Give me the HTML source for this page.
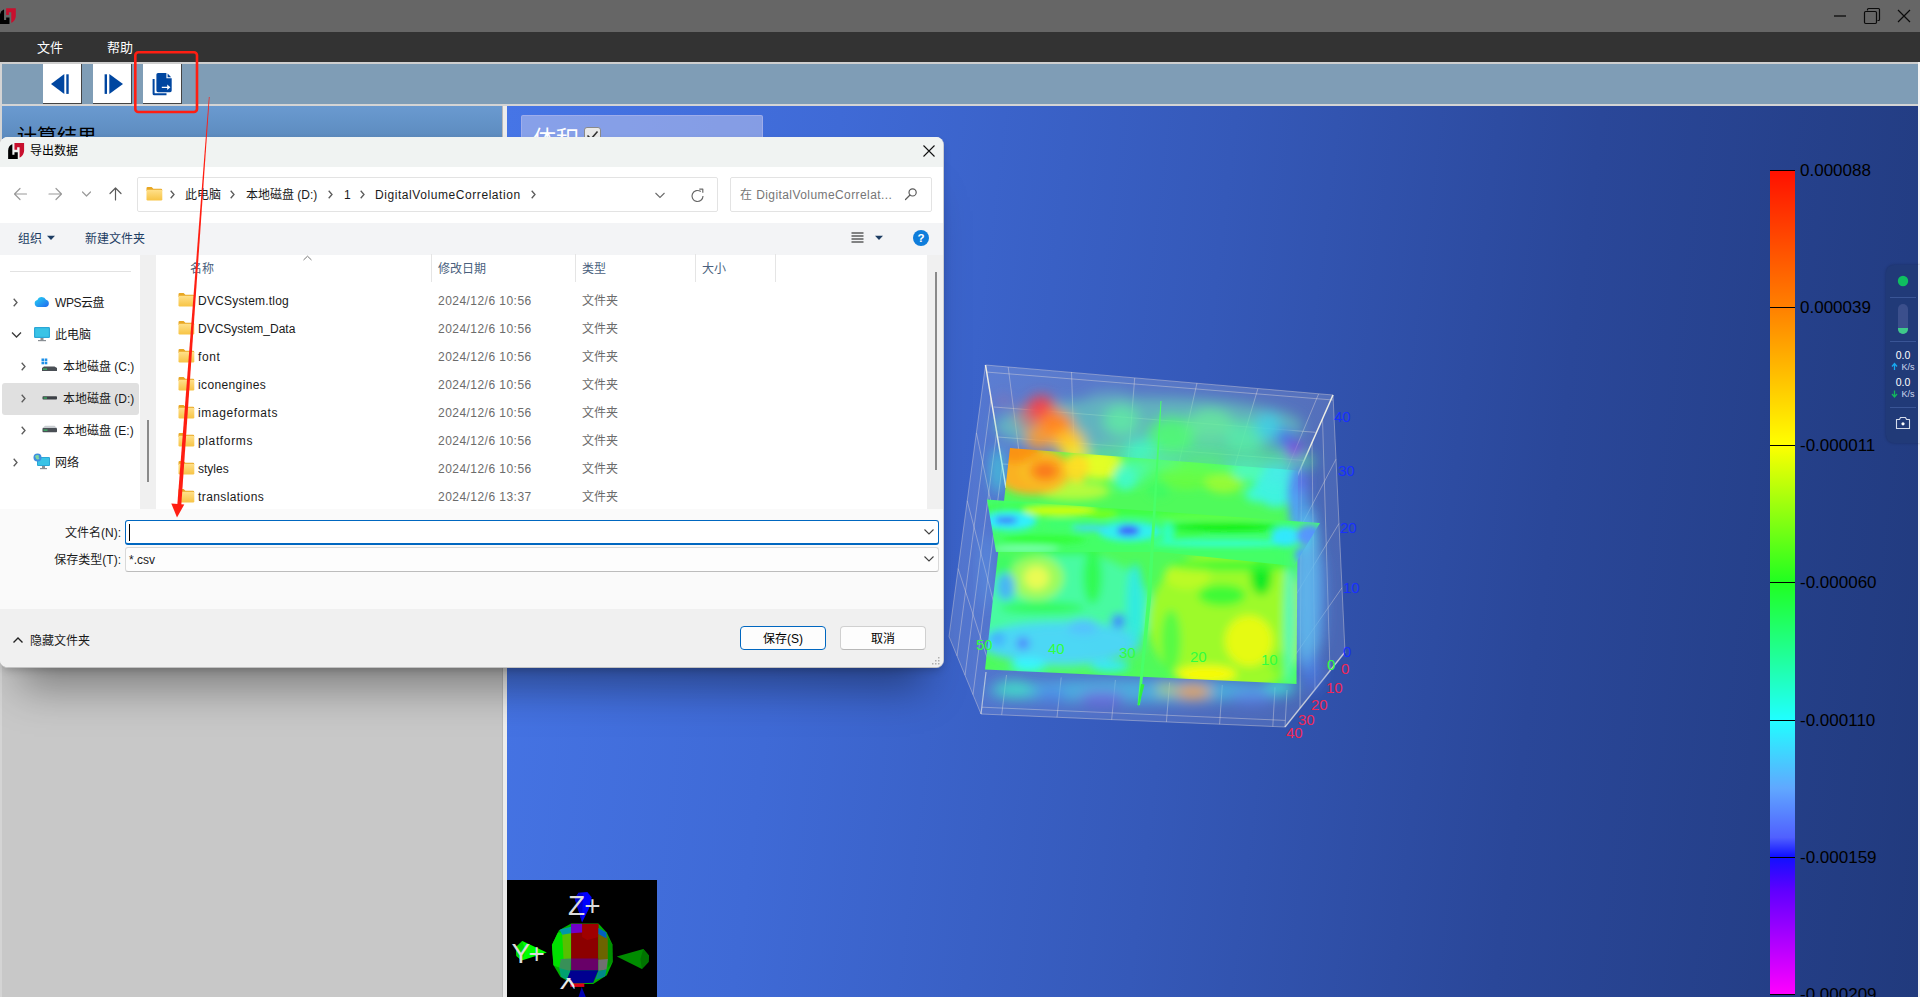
<!DOCTYPE html>
<html lang="zh-CN">
<head>
<meta charset="utf-8">
<title>导出数据</title>
<style>
*{box-sizing:border-box;margin:0;padding:0}
html,body{width:1920px;height:997px;overflow:hidden;background:#666}
body{position:relative;font-family:"Liberation Sans","Noto Sans CJK SC",sans-serif;font-size:12px;color:#1a1a1a}
.abs{position:absolute}
#titlebar{left:0;top:0;width:1920px;height:32px;background:#666666}
#menubar{left:0;top:32px;width:1920px;height:30px;background:#333333;color:#fff;font-size:13px}
#menubar span{position:absolute;top:7px;line-height:18px}
#toolbar{left:0;top:62px;width:1920px;height:44px;background:#7f9db6;border-top:2px solid #cfcfcf;border-bottom:2px solid #d4d4d4;border-left:2px solid #d4d4d4;border-right:2px solid #f4f4f4}
.tbtn{position:absolute;top:64px;width:39px;height:40px;background:#fff;border-right:1px solid #444;border-bottom:1px solid #444}
#leftpanel{left:0;top:106px;width:502px;height:891px;background:linear-gradient(#6a9ad0 0,#5f8ec2 26px,#5783b4 40px,#c8c8c8 40px);border-left:2px solid #d4d4d4}
#leftpanel .hd{position:absolute;left:15px;top:16px;font-size:20px;line-height:30px;color:#000;white-space:nowrap}
#splitter{left:502px;top:106px;width:5px;height:891px;background:#ececec;border-left:1px solid #b9b9b9}
#view{left:507px;top:106px;width:1411px;height:891px;overflow:hidden;background:linear-gradient(97deg,#4675e6 0%,#3f6ad6 22%,#3559b9 48%,#2a4799 72%,#213a7d 100%)}
#rightedge{left:1918px;top:62px;width:2px;height:935px;background:#f4f4f4}

#dlgshadow{left:0;top:137px;width:944px;height:531px;border-radius:8px;box-shadow:0 40px 40px -20px rgba(0,0,0,.37),0 4px 8px -2px rgba(0,0,0,.22)}
#dlg{left:0;top:137px;width:944px;height:531px;border-radius:8px;background:#fff;overflow:hidden;border-right:1px solid #c9ccd2;border-bottom:1px solid #c2c2c2}
#dlg .t{position:absolute;white-space:nowrap;line-height:16px;font-size:12px}
#dlg .g{color:#6b6b6b}
#dlg .h{color:#4a5f7d}
#dtitle{left:0;top:0;width:943px;height:30px;background:#f0f3f2}
#daddr{left:0;top:30px;width:943px;height:56px;background:#fff}
#dcmd{left:0;top:86px;width:943px;height:32px;background:#f3f4f6}
#dnavscroll{left:140px;top:118px;width:16px;height:254px;background:#f0f0f0}
#dlistscroll{left:927px;top:118px;width:16px;height:254px;background:#f0f0f0}
#dform{left:0;top:372px;width:943px;height:100px;background:#fafafa}
#dfoot{left:0;top:472px;width:943px;height:59px;background:#f0f0f0}
.box{position:absolute;border:1px solid #e3e3e3;background:#fff;border-radius:2px}
</style>
</head>
<body>
<div id="titlebar" class="abs"></div>
<div id="menubar" class="abs"><span style="left:37px">文件</span><span style="left:107px">帮助</span></div>
<div id="toolbar" class="abs"></div>
<div id="leftpanel" class="abs"><div class="hd">计算结果</div></div>
<div id="splitter" class="abs"></div>
<div id="view" class="abs"></div>
<div id="rightedge" class="abs"></div>
<svg class="abs" style="left:0;top:0" width="1920" height="32" viewBox="0 0 1920 32">
<!-- app logo -->
<g transform="translate(-0.3 8.2)"><path d="M0.130 7.460 Q0.400 2.600 4.050 1.280 L4.350 1.280 L4.350 11.830 L6.460 11.830 L6.460 9.270 L9.770 9.270 L9.770 15.900 L0.130 15.900 Z" fill="#000"/><path d="M6.460 0.080 L16.100 0.080 L16.100 8.060 Q15.700 12.600 11.580 14.690 L11.580 4.140 L9.170 4.140 L9.170 6.860 L6.460 6.860 Z" fill="#c8102e"/></g>
<!-- window controls -->
<path d="M1834 16 H1846" stroke="#0b0b0b" stroke-width="1.3" fill="none"/>
<path d="M1867.5 10.5 V9.5 Q1867.5 8.5 1868.5 8.5 H1878.5 Q1879.5 8.5 1879.5 9.5 V19.5 Q1879.5 20.5 1878.5 20.5 H1877.5" stroke="#0b0b0b" stroke-width="1.2" fill="none"/>
<rect x="1864.5" y="11.5" width="12" height="12" rx="1.2" stroke="#0b0b0b" stroke-width="1.2" fill="none"/>
<path d="M1898 10 L1910 22 M1910 10 L1898 22" stroke="#0b0b0b" stroke-width="1.2" fill="none"/>
</svg>
<div class="tbtn" style="left:43px"></div><div class="tbtn" style="left:93px"></div><div class="tbtn" style="left:143px"></div>
<svg class="abs" style="left:0;top:62px" width="220" height="44" viewBox="0 62 220 44">
<g fill="#0046a0">
<path d="M51 84 L64.3 74 L64.3 94 Z"/><rect x="66.3" y="74.3" width="2.4" height="19.6"/>
<rect x="104.6" y="74.3" width="2.4" height="19.6"/><path d="M123 84 L109.3 74 L109.3 94 Z"/>
<!-- export icon -->
<path d="M152.6 79 H154.6 V93.2 H166.5 V95.3 H154.2 Q152.6 95.3 152.6 93.7 Z"/>
<path d="M156.4 74.6 Q156.4 73 158 73 H166.4 V78.3 H171.7 V90.6 Q171.7 92.2 170.1 92.2 H158 Q156.4 92.2 156.4 90.6 Z M167.6 73.6 L171.2 77.2 H167.6 Z"/>
</g>
<path d="M161.8 86.7 H167.2 V84.6 L170.4 87.3 L167.2 90 V87.9 H161.8 Z" fill="#fff"/>
</svg>

<div class="abs" style="left:521px;top:115px;width:242px;height:60px;background:rgba(190,196,236,.55);border:1px solid rgba(170,180,235,.7);border-radius:2px"></div>
<div class="abs" style="left:533px;top:122px;font-size:23px;line-height:34px;color:#fff;white-space:nowrap">体积</div>
<div class="abs" style="left:584px;top:127px;width:17px;height:17px;background:#e9e9e9;border:1px solid #8a8a8a;border-radius:3px"></div><svg class="abs" style="left:584px;top:127px" width="17" height="17" viewBox="0 0 17 17"><path d="M3.500 8.500 L7 12 L13.500 4.500" fill="none" stroke="#333" stroke-width="1.600"/></svg>
<svg class="abs" style="left:507px;top:106px" width="1411" height="891" viewBox="507 106 1411 891" font-family="Liberation Sans,sans-serif">
<defs>
<linearGradient id="cbar" x1="0" y1="0" x2="0" y2="1">
<stop offset="0" stop-color="#ff1000"/><stop offset="0.1667" stop-color="#ff8000"/><stop offset="0.3333" stop-color="#ffff00"/><stop offset="0.5" stop-color="#20ff20"/><stop offset="0.6667" stop-color="#20ffff"/><stop offset="0.75" stop-color="#60a8ff"/><stop offset="0.81" stop-color="#5060ff"/><stop offset="0.8333" stop-color="#1010ff"/><stop offset="0.875" stop-color="#6000ff"/><stop offset="1" stop-color="#ff00ff"/>
</linearGradient>
</defs>
<!--VOLUME--><defs><radialGradient id="gor"><stop offset="0" stop-color="#ff6c10"/><stop offset=".45" stop-color="#ff8c14"/><stop offset=".75" stop-color="#ffc020" stop-opacity=".9"/><stop offset="1" stop-color="#f0f020" stop-opacity="0"/></radialGradient><filter id="bl8" x="-30%" y="-30%" width="160%" height="160%"><feGaussianBlur stdDeviation="6.5"/></filter><filter id="bl5" x="-30%" y="-30%" width="160%" height="160%"><feGaussianBlur stdDeviation="4.5"/></filter><filter id="bl3" x="-30%" y="-30%" width="160%" height="160%"><feGaussianBlur stdDeviation="3"/></filter>
<clipPath id="cxp"><polygon points="1010,448 1298,470.5 1296.5,684 985,669.5"/></clipPath><clipPath id="czp"><polygon points="987,499.5 1320,523 1294,566 1160,552 996,552"/></clipPath></defs>
<polygon points="985.5,365 1333,395 1345,652 1285,727 981,714 949,636.5" fill="#fff" fill-opacity=".13"/>
<polygon points="985.5,365 1333,395 1291,489 1008,497" fill="#fff" fill-opacity=".05"/>
<g stroke="#efe6dc" stroke-opacity=".38" stroke-width="1" fill="none"><polygon points="985.5,365 1333,395 1345,652 1285,727 981,714 949,636.5" fill="none"/><path d="M986 372 L1333 400"/><path d="M994 407 L1315.6 432.3"/><path d="M998 437 L1303.6 460.4"/><path d="M1002 464 L1296 478"/><path d="M1008.2 367 L1020.8 466.1"/><path d="M1071.5 372 L1074.6 464.5"/><path d="M1134.7 378 L1127.2 473.0"/><path d="M1197 383 L1177.0 471.8"/><path d="M1257.8 389 L1229.7 483.2"/><path d="M1318.6 394 L1279.7 487.0"/><path d="M1342.0 587.8 L1286.5 667.5"/><path d="M1339.0 523.5 L1288.0 608.0"/><path d="M1336.0 459.2 L1289.5 548.5"/><path d="M1330.0 670.8 L1322.5 418.5"/><path d="M1315.0 689.5 L1312.0 442.0"/><path d="M1300.0 708.2 L1301.5 465.5"/><path d="M958.1 568.6 L987.8 659.8"/><path d="M967.2 500.8 L994.5 605.5"/><path d="M976.4 432.9 L1001.2 551.2"/><path d="M957.0 655.9 L991.1 398.0"/><path d="M965.0 675.2 L996.8 431.0"/><path d="M973.0 694.6 L1002.4 464.0"/><path d="M1001.7 714.9 L1006.5 675.0"/><path d="M1057.0 717.2 L1061.2 677.5"/><path d="M1111.7 719.6 L1115.4 680.0"/><path d="M1166.4 721.9 L1169.6 682.5"/><path d="M1219.6 724.2 L1222.3 685.0"/><path d="M1272.8 726.5 L1275.0 687.4"/><path d="M981.9 707.2 L1285.3 720.4"/></g>
<g stroke="#f6f4e8" stroke-opacity=".95" stroke-width="1.5" fill="none"><path d="M985.5 365 L1006 488"/><path d="M1333 395 L1291.5 489"/><path d="M981 714 L986 672" stroke-opacity=".6" stroke-width="1.2"/><path d="M1285 727 L1287 690" stroke-opacity=".35" stroke-width="1"/><path d="M1285 727 L1345 652" stroke-opacity=".6"/></g>
<g filter="url(#bl8)"><ellipse cx="1148.5" cy="426.4" rx="154.4" ry="29" fill="#68d8b8" fill-opacity="0.6"/><ellipse cx="1187.1" cy="461.2" rx="127.4" ry="19.3" fill="#58f090" fill-opacity="0.72"/><ellipse cx="1026.9" cy="416.8" rx="11.6" ry="12.4" fill="#e06868" fill-opacity="0.6"/><ellipse cx="1041.2" cy="409.1" rx="13.9" ry="13.9" fill="#f04450"/><ellipse cx="1055.8" cy="426.4" rx="17.8" ry="16.2" fill="#ff8420"/><ellipse cx="1069.3" cy="441.9" rx="15.4" ry="12.4" fill="#ffc428"/><ellipse cx="1075.1" cy="453.5" rx="13.9" ry="8.5" fill="#f0e830"/><ellipse cx="1038.5" cy="438" rx="13.9" ry="12.4" fill="#ff9a30" fill-opacity="0.85"/><ellipse cx="997.9" cy="470.8" rx="6.9" ry="23.2" fill="#40e0e0" fill-opacity="0.7"/><ellipse cx="1003.7" cy="401.3" rx="4.6" ry="6.2" fill="#d06080" fill-opacity="0.45"/><ellipse cx="1121.5" cy="420.6" rx="18.5" ry="15.4" fill="#60f0a0" fill-opacity="0.75"/><ellipse cx="1171.7" cy="434.2" rx="23.9" ry="17.4" fill="#50ff70" fill-opacity="0.85"/><ellipse cx="1210.3" cy="424.5" rx="23.9" ry="15.4" fill="#68f098" fill-opacity="0.75"/><ellipse cx="1245" cy="436.1" rx="20.1" ry="15.4" fill="#58f0a8" fill-opacity="0.8"/><ellipse cx="1268.2" cy="426.4" rx="13.1" ry="13.9" fill="#40d0e8" fill-opacity="0.85"/><ellipse cx="1109.9" cy="397.5" rx="23.2" ry="7.7" fill="#70c8c0" fill-opacity="0.35"/><ellipse cx="1140.8" cy="451.5" rx="15.4" ry="13.5" fill="#40f8c8" fill-opacity="0.8"/><ellipse cx="1285.6" cy="438" rx="8.9" ry="9.7" fill="#4868e8" fill-opacity="0.95"/><ellipse cx="1293.7" cy="452.3" rx="8.1" ry="9.3" fill="#8a3ce0"/><ellipse cx="1297.5" cy="484.3" rx="6.9" ry="13.9" fill="#6868f0" fill-opacity="0.85"/><ellipse cx="986.3" cy="571.2" rx="6.2" ry="38.6" fill="#60a8f0" fill-opacity="0.4"/><ellipse cx="1306.8" cy="590.5" rx="13.1" ry="84.9" fill="#58b8f0" fill-opacity="0.85"/><ellipse cx="1301.4" cy="536.5" rx="10.8" ry="13.9" fill="#40e0f0" fill-opacity="0.75"/><ellipse cx="1311.4" cy="671.6" rx="9.7" ry="19.3" fill="#4a78e8" fill-opacity="0.65"/><ellipse cx="1320.3" cy="602.1" rx="6.9" ry="46.3" fill="#5a9af0" fill-opacity="0.4"/><ellipse cx="1140.8" cy="690.9" rx="154.4" ry="11.6" fill="#48c8e8" fill-opacity="0.7"/><ellipse cx="1013.4" cy="689" rx="19.3" ry="9.3" fill="#40f0c0" fill-opacity="0.65"/><ellipse cx="1102.2" cy="697.9" rx="23.2" ry="6.9" fill="#7858e0" fill-opacity="0.7"/><ellipse cx="1192.9" cy="691.7" rx="18.5" ry="7.7" fill="#ffa040" fill-opacity="0.85"/><ellipse cx="1165.9" cy="689.4" rx="9.3" ry="6.9" fill="#e0e040" fill-opacity="0.6"/><ellipse cx="1252.7" cy="696.7" rx="23.2" ry="7.7" fill="#6080f0" fill-opacity="0.6"/><ellipse cx="1052" cy="694" rx="15.4" ry="6.9" fill="#5078f0" fill-opacity="0.6"/><ellipse cx="1279.8" cy="686.3" rx="15.4" ry="8.5" fill="#40e8d0" fill-opacity="0.65"/></g>
<g clip-path="url(#cxp)" opacity=".97"><rect x="980" y="440" width="330" height="250" fill="#50ff58"/><g filter="url(#bl5)"><ellipse cx="1073.2" cy="490.9" rx="36.7" ry="9.3" fill="#b8ff38"/><ellipse cx="1100.2" cy="465" rx="23.9" ry="14.7" fill="#e8ff20"/><ellipse cx="1032.7" cy="470.8" rx="38.6" ry="23.9" fill="#ffb41c"/><ellipse cx="1017.2" cy="451.5" rx="23.2" ry="11.6" fill="#ff9410"/><ellipse cx="1045" cy="470.8" rx="25.5" ry="17.8" fill="url(#gor)"/><ellipse cx="1077.1" cy="467" rx="11.6" ry="15.4" fill="#ffe020"/><ellipse cx="1125.3" cy="478.6" rx="11.6" ry="11.6" fill="#40ffc0"/><ellipse cx="1187.1" cy="474.7" rx="27" ry="14.7" fill="#68ff40"/><ellipse cx="1223.8" cy="482.4" rx="19.3" ry="10.8" fill="#98ff30"/><ellipse cx="1256.6" cy="494" rx="11.6" ry="8.5" fill="#40ffd0"/><ellipse cx="1275.9" cy="484.3" rx="21.2" ry="23.2" fill="#40f8e0"/><ellipse cx="1297.1" cy="497.9" rx="6.9" ry="34.7" fill="#5088f0"/><ellipse cx="1248.9" cy="470.8" rx="15.4" ry="9.7" fill="#50ffb0"/><ellipse cx="1158.1" cy="490.1" rx="11.6" ry="7.7" fill="#40ff60"/><ellipse cx="1063.6" cy="609.8" rx="88.8" ry="57.9" fill="#48ffa0"/><ellipse cx="1036.5" cy="577.8" rx="27" ry="22.4" fill="#a0ff58"/><ellipse cx="1036.5" cy="577.8" rx="12.4" ry="11.6" fill="#f0ff50"/><ellipse cx="1092.5" cy="577" rx="9.3" ry="27" fill="#30ff50"/><ellipse cx="1042.3" cy="607.9" rx="42.5" ry="5.4" fill="#30ff50"/><ellipse cx="1001.8" cy="565.4" rx="11.6" ry="11.6" fill="#40ff60"/><ellipse cx="1067.4" cy="550" rx="34.7" ry="4.6" fill="#38ff40"/><ellipse cx="1059.7" cy="642.6" rx="81.1" ry="20.1" fill="#44e0f4"/><ellipse cx="1023" cy="643.4" rx="6.6" ry="6.6" fill="#4878ff"/><ellipse cx="1118.4" cy="621.4" rx="6.9" ry="7.3" fill="#4080ff"/><ellipse cx="1005.6" cy="586.7" rx="9.3" ry="13.9" fill="#48b8f4"/><ellipse cx="1028.8" cy="663.9" rx="17.4" ry="6.9" fill="#30ffff"/><ellipse cx="1017.2" cy="674.7" rx="34.7" ry="3.1" fill="#40ff80"/><ellipse cx="1135" cy="606" rx="8.5" ry="42.5" fill="#30f0e0"/><ellipse cx="1109.9" cy="665.8" rx="19.3" ry="5.4" fill="#30f0ff"/><ellipse cx="997.9" cy="638.8" rx="7.7" ry="7.7" fill="#40b0ff"/><ellipse cx="1082.9" cy="627.2" rx="15.4" ry="7.7" fill="#50c8ff"/><ellipse cx="1229.6" cy="621.4" rx="81.1" ry="73.4" fill="#a0ff28"/><ellipse cx="1261.2" cy="575.8" rx="10.8" ry="19.3" fill="#10f020"/><ellipse cx="1221.9" cy="595.2" rx="23.9" ry="10.8" fill="#40ff30"/><ellipse cx="1248.9" cy="640.7" rx="23.9" ry="25.5" fill="#ecff08"/><ellipse cx="1206.4" cy="673.9" rx="30.1" ry="8.5" fill="#ffff00"/><ellipse cx="1187.1" cy="575.8" rx="23.2" ry="13.1" fill="#c0ff20"/><ellipse cx="1170.9" cy="640.7" rx="10" ry="30.9" fill="#58ff40"/><ellipse cx="1279.8" cy="663.9" rx="10" ry="11.6" fill="#78ff30"/><ellipse cx="1289.4" cy="621.4" rx="4.6" ry="65.6" fill="#40ffc0"/><ellipse cx="1237.3" cy="565.4" rx="65.6" ry="5.4" fill="#38ff30"/></g></g>
<g filter="url(#bl8)"><ellipse cx="1133.1" cy="470.8" rx="16.2" ry="11.6" fill="#48f8c8" fill-opacity="0.7"/><ellipse cx="1160.1" cy="463.1" rx="23.2" ry="8.5" fill="#58f8a0" fill-opacity="0.6"/><ellipse cx="1204.5" cy="463.9" rx="23.9" ry="8.5" fill="#58ff70" fill-opacity="0.55"/><ellipse cx="1246.9" cy="467" rx="21.2" ry="9.3" fill="#50f8c0" fill-opacity="0.6"/><ellipse cx="1276.7" cy="472.8" rx="13.9" ry="11.6" fill="#48e8e8" fill-opacity="0.7"/><ellipse cx="1297.5" cy="490.1" rx="6.9" ry="27" fill="#5878f0" fill-opacity="0.85"/><ellipse cx="1299.1" cy="509.4" rx="8.5" ry="23.2" fill="#50c0f8" fill-opacity="0.6"/></g>
<g clip-path="url(#czp)" opacity=".98"><rect x="980" y="495" width="345" height="75" fill="#44ff68"/><g filter="url(#bl3)"><ellipse cx="1156.2" cy="509.4" rx="185.3" ry="5.4" fill="#40ff40"/><ellipse cx="1059.7" cy="510.6" rx="36.7" ry="5.4" fill="#d0ff10"/><ellipse cx="1102.2" cy="514.1" rx="15.4" ry="3.5" fill="#80ff10"/><ellipse cx="1009.5" cy="521" rx="27" ry="9.3" fill="#30f0ff"/><ellipse cx="1006.4" cy="520.3" rx="11.6" ry="3.9" fill="#4078ff"/><ellipse cx="1129.2" cy="531.4" rx="30.9" ry="10" fill="#30f0f0"/><ellipse cx="1128.4" cy="530.7" rx="11.6" ry="5.4" fill="#4060ff"/><ellipse cx="1090.6" cy="528" rx="19.3" ry="3.1" fill="#40d8ff"/><ellipse cx="1061.6" cy="524.1" rx="15.4" ry="5" fill="#40ff70"/><ellipse cx="1044.2" cy="539.6" rx="42.5" ry="3.9" fill="#30ff30"/><ellipse cx="1024.9" cy="548.8" rx="34.7" ry="3.5" fill="#80ffb0"/><ellipse cx="1218" cy="517.2" rx="61.8" ry="4.2" fill="#60ff48"/><ellipse cx="1223.8" cy="527.2" rx="54.1" ry="4.2" fill="#10f010"/><ellipse cx="1223.8" cy="543.4" rx="73.4" ry="3.1" fill="#30ffe0"/><ellipse cx="1181.3" cy="534.9" rx="23.2" ry="3.9" fill="#40ff50"/><ellipse cx="1285.6" cy="536.5" rx="14.7" ry="10" fill="#30e8ff"/><ellipse cx="1309.5" cy="535.7" rx="12.4" ry="10.8" fill="#5088ff"/><ellipse cx="1302.9" cy="555" rx="7.7" ry="7.7" fill="#4898ff"/><ellipse cx="1167.8" cy="533.4" rx="5.8" ry="10.8" fill="#30ffc0"/></g></g>
<g filter="url(#bl8)"><ellipse cx="1306.8" cy="590.5" rx="13.1" ry="77.2" fill="#70c0f0" fill-opacity="0.3"/><ellipse cx="1067.4" cy="644.6" rx="77.2" ry="23.2" fill="#70c0f8" fill-opacity="0.2"/></g>
<polygon points="1160.5,401 1161.5,401 1151,600 1140,705 1137.5,705 1147,600" fill="#48ff68"/><polygon points="1141,684 1144.500,684.500 1139,706 1137.800,705" fill="#30f040"/>
<g font-size="15"><text x="976" y="650" fill="#30ff40">50</text><text x="1048" y="654" fill="#30ff40">40</text><text x="1119" y="658" fill="#30ff40">30</text><text x="1190" y="662" fill="#30ff40">20</text><text x="1261" y="665" fill="#30ff40">10</text><text x="1327" y="670" fill="#30ff40">0</text><text x="1341" y="674" fill="#f02858">0</text><text x="1326" y="693" fill="#f02858">10</text><text x="1311" y="710" fill="#f02858">20</text><text x="1298" y="725" fill="#f02858">30</text><text x="1286" y="738" fill="#f02858">40</text><text x="1334" y="422" fill="#1830ff">40</text><text x="1338" y="476" fill="#1830ff">30</text><text x="1340" y="533" fill="#1830ff">20</text><text x="1343" y="593" fill="#1830ff">10</text><text x="1343" y="657" fill="#1830ff">0</text></g><!--/VOLUME-->
<rect x="1770" y="170" width="25" height="824" fill="url(#cbar)"/>
<g fill="#000">
<path d="M1770 170.5 H1795" stroke="#000" stroke-width="1"/><text x="1800" y="176" font-size="17">0.000088</text>
<path d="M1770 307.5 H1795" stroke="#000" stroke-width="1"/><text x="1800" y="313" font-size="17">0.000039</text>
<path d="M1770 445.5 H1795" stroke="#000" stroke-width="1"/><text x="1800" y="451" font-size="17">-0.000011</text>
<path d="M1770 582.5 H1795" stroke="#000" stroke-width="1"/><text x="1800" y="588" font-size="17">-0.000060</text>
<path d="M1770 720.5 H1795" stroke="#000" stroke-width="1"/><text x="1800" y="726" font-size="17">-0.000110</text>
<path d="M1770 857.5 H1795" stroke="#000" stroke-width="1"/><text x="1800" y="863" font-size="17">-0.000159</text>
<path d="M1770 994.5 H1795" stroke="#000" stroke-width="1"/><text x="1800" y="1000" font-size="17">-0.000209</text>
</g>
<!--ORIENT--><rect x="507" y="880" width="150" height="117" fill="#000"/>
<polygon points="574.8,898.7 578.5,892.8 587.3,892.0 591.7,897.2 588.8,909.0 582.1,922.2" fill="#0000ff"/>
<polygon points="574.8,898.7 578.5,892.8 582.9,894.2 582.1,922.2" fill="#0000c8"/>
<polygon points="515.8,947.3 522.4,941.1 546.8,952.5 521.7,960.6 516.5,956.1" fill="#00ff00"/>
<polygon points="515.8,947.3 522.4,941.1 525.4,951.7 521.7,960.6 516.5,956.1" fill="#00d800"/>
<polygon points="616.8,956.4 643.3,949.1 648.9,955.4 648.5,962.0 641.9,969.1" fill="#008c00"/>
<polygon points="643.3,949.1 648.9,955.4 648.5,962.0 641.9,969.1 640.4,959.1" fill="#007400"/>
<polygon points="581.7,987.1 578.5,997.0 585.8,997.0" fill="#0000b0"/>
<clipPath id="osph"><polygon points="571.1,923.4 598.4,923.4 606.8,932.6 612.4,944.4 612.7,962.0 606.8,975.3 593.2,983.9 572.6,983.9 560.5,977.1 553.4,965.0 551.9,945.1 559.0,930.3"/></clipPath>
<g clip-path="url(#osph)"><rect x="550.1" y="920.2" width="64" height="66" fill="#00b000"/><polygon points="551.9,932.6 571.1,932.6 571.1,959.1 560.8,967.9 551.9,965.0" fill="#00e000"/><polygon points="562.2,934.0 571.1,932.6 571.1,959.1 563.7,962.0" fill="#58c000"/><polygon points="571.1,923.7 598.4,923.7 598.4,959.1 571.1,959.1" fill="#8c0000"/><polygon points="582.1,923.7 598.4,923.7 598.4,937.0 587.3,939.9 582.1,937.0" fill="#a00000"/><polygon points="598.4,932.6 607.9,937.0 607.9,959.1 598.4,962.0" fill="#6c6400"/><polygon points="607.9,937.0 612.4,944.4 612.4,962.0 607.9,967.9 607.9,959.1" fill="#009000"/><polygon points="571.1,923.7 582.1,923.7 582.1,932.6 571.1,933.3" fill="#7000c8"/><polygon points="559.3,929.6 571.1,926.7 571.1,933.3 562.2,934.8" fill="#0098a8"/><polygon points="598.4,928.1 606.5,932.6 606.5,938.5 598.4,934.0" fill="#0060c0"/><polygon points="571.1,958.4 598.4,958.4 598.4,970.2 571.1,970.2" fill="#680068"/><polygon points="560.8,959.1 571.1,958.4 570.3,970.9 563.7,975.3 559.3,967.9" fill="#389058"/><polygon points="598.4,959.8 607.9,959.1 606.5,969.4 598.4,970.9" fill="#707070"/><polygon points="570.3,970.2 598.4,970.2 593.2,982.7 572.6,983.4 566.7,978.3" fill="#000090"/><polygon points="559.3,967.9 570.3,970.9 566.7,979.7 560.8,976.8" fill="#00a070"/><polygon points="598.4,970.9 606.5,969.4 605.0,976.8 595.4,979.7" fill="#008888"/></g>
<rect x="570.3" y="983.4" width="14" height="3.5" fill="#e00018"/>
<text x="568.1" y="914.6" font-size="28" letter-spacing="-1" fill="#dcdcdc">Z+</text>
<text x="511.4" y="963.3" font-size="28" letter-spacing="-1.500" fill="#dcdcdc">Y+</text>
<text x="559.6" y="988.6" font-size="27" fill="#e8e8e8" clip-path="url(#oxc)">X-</text>
<clipPath id="oxc"><rect x="555" y="978" width="19.5" height="12.5"/></clipPath><!--/ORIENT-->
</svg>
<div class="abs" style="left:1886px;top:265px;width:34px;height:178px;background:#213a78;border-radius:8px 0 0 8px;box-shadow:0 0 3px rgba(0,0,0,.25)"></div>
<div class="abs" style="left:1918px;top:265px;width:2px;height:178px;background:#eef0f4"></div>
<svg class="abs" style="left:1886px;top:265px" width="32" height="178" viewBox="1886 265 32 178" font-family="Liberation Sans,sans-serif">
<circle cx="1903" cy="281" r="5.2" fill="#0fbf60"/>
<path d="M1890 297.500 H1916 M1890 341.500 H1916 M1890 407.500 H1916" stroke="#3a5596" stroke-width="1"/>
<rect x="1898" y="304" width="10" height="30" rx="5" fill="#3b4f8c"/>
<path d="M1898 328 H1908 V329 A5 5 0 0 1 1898 329 Z" fill="#3fc98a"/>
<text x="1903" y="359" font-size="10.500" fill="#fff" text-anchor="middle">0.0</text>
<text x="1908" y="369.500" font-size="9" fill="#cfd8ee" text-anchor="middle">K/s</text>
<path d="M1894.500 370 V364 M1892 366.500 L1894.500 363.500 L1897 366.500" stroke="#18a8f0" stroke-width="1.300" fill="none"/>
<text x="1903" y="386" font-size="10.500" fill="#fff" text-anchor="middle">0.0</text>
<text x="1908" y="396.500" font-size="9" fill="#cfd8ee" text-anchor="middle">K/s</text>
<path d="M1894.500 390.500 V396.500 M1892 394 L1894.500 397 L1897 394" stroke="#12b85c" stroke-width="1.300" fill="none"/>
<path d="M1896.500 419.500 H1899.500 L1900.500 417.500 H1905.500 L1906.500 419.500 H1909.500 V428.500 H1896.500 Z" stroke="#d6dcec" stroke-width="1.100" fill="none" stroke-linejoin="round"/>
<circle cx="1903" cy="423.800" r="1.600" fill="#fff"/>
</svg>


<div id="dlgshadow" class="abs"></div>
<div id="dlg" class="abs">
<svg width="0" height="0" style="position:absolute"><defs>
<linearGradient id="fg" x1="0" y1="0" x2="0" y2="1"><stop offset="0" stop-color="#ffe08a"/><stop offset="1" stop-color="#f7c445"/></linearGradient>
</defs></svg>
<div id="dtitle" class="abs"></div>
<div id="daddr" class="abs"></div>
<div id="dcmd" class="abs"></div>
<div id="dnavscroll" class="abs"></div>
<div id="dlistscroll" class="abs"></div>
<div id="dform" class="abs"></div>
<div id="dfoot" class="abs"></div>
<!-- title -->
<svg class="abs" style="left:8px;top:6px" width="17" height="16" viewBox="0 0 17 16"><path d="M0.130 7.460 Q0.400 2.600 4.050 1.280 L4.350 1.280 L4.350 11.830 L6.460 11.830 L6.460 9.270 L9.770 9.270 L9.770 15.900 L0.130 15.900 Z" fill="#000"/><path d="M6.460 0.080 L16.100 0.080 L16.100 8.060 Q15.700 12.600 11.580 14.690 L11.580 4.140 L9.170 4.140 L9.170 6.860 L6.460 6.860 Z" fill="#c8102e"/></svg>
<span class="t" style="left:30px;top:6px;color:#000">导出数据</span>
<svg class="abs" style="left:922px;top:7px" width="14" height="14" viewBox="0 0 14 14"><path d="M1.5 1.5 L12.5 12.5 M12.5 1.5 L1.5 12.5" stroke="#111" stroke-width="1.1" fill="none"/></svg>
<!-- nav arrows -->
<svg class="abs" style="left:10px;top:46px" width="120" height="22" viewBox="0 0 120 22" fill="none" stroke-linecap="round" stroke-linejoin="round">
<path d="M16.5 11 H5 M10 5.5 L4.5 11 L10 16.5" stroke="#9a9a9a" stroke-width="1.2"/>
<path d="M39 11 H51 M46 5.500 L51.5 11 L46 16.5" stroke="#9a9a9a" stroke-width="1.2"/>
<path d="M72.500 9 L76.500 13 L80.500 9" stroke="#9a9a9a" stroke-width="1.2"/>
<path d="M105.500 17 V5 M100 10.500 L105.500 5 L111 10.500" stroke="#5a5a5a" stroke-width="1.2"/>
</svg>
<!-- address box -->
<div class="box" style="left:137px;top:40px;width:581px;height:35px"></div>
<svg class="abs" style="left:146px;top:49px" width="17" height="16" viewBox="0 0 17 16"><path d="M0.5 2.2 Q0.5 1 1.7 1 H5.6 L7.4 2.8 H15 Q16.2 2.8 16.2 4 V5 H0.5 Z" fill="#e8a723"/><rect x="0.5" y="3.8" width="15.8" height="10.6" rx="1.2" fill="url(#fg)"/></svg>
<svg class="abs" style="left:170px;top:53px" width="6" height="9" viewBox="0 0 6 9"><path d="M0.7 0.7 L4 4.5 L0.7 8.3" fill="none" stroke="#5c5c5c" stroke-width="1.3"/></svg>
<span class="t" style="left:185px;top:50px">此电脑</span>
<svg class="abs" style="left:230px;top:53px" width="6" height="9" viewBox="0 0 6 9"><path d="M0.7 0.7 L4 4.5 L0.7 8.3" fill="none" stroke="#5c5c5c" stroke-width="1.3"/></svg>
<span class="t" style="left:246px;top:50px">本地磁盘 (D:)</span>
<svg class="abs" style="left:328px;top:53px" width="6" height="9" viewBox="0 0 6 9"><path d="M0.7 0.7 L4 4.5 L0.7 8.3" fill="none" stroke="#5c5c5c" stroke-width="1.3"/></svg>
<span class="t" style="left:344px;top:50px">1</span>
<svg class="abs" style="left:360px;top:53px" width="6" height="9" viewBox="0 0 6 9"><path d="M0.7 0.7 L4 4.5 L0.7 8.3" fill="none" stroke="#5c5c5c" stroke-width="1.3"/></svg>
<span class="t" id="dvc" style="left:375px;top:50px;letter-spacing:0.57px">DigitalVolumeCorrelation</span>
<svg class="abs" style="left:531px;top:53px" width="6" height="9" viewBox="0 0 6 9"><path d="M0.7 0.7 L4 4.5 L0.7 8.3" fill="none" stroke="#5c5c5c" stroke-width="1.3"/></svg>
<svg class="abs" style="left:653px;top:52px" width="14" height="12" viewBox="0 0 14 12"><path d="M2.500 4 L7 8.500 L11.500 4" fill="none" stroke="#6a6a6a" stroke-width="1.1"/></svg>
<svg class="abs" style="left:690px;top:51px" width="16" height="16" viewBox="0 0 16 16" fill="none" stroke="#6a6a6a" stroke-width="1.2"><path d="M13 8 A5.5 5.500 0 1 1 10.800 3.600"/><path d="M9.300 1.200 H12.800 V4.700" stroke-linejoin="round"/></svg>
<!-- search -->
<div class="box" style="left:730px;top:40px;width:202px;height:35px"></div>
<span class="t" style="left:740px;top:50px;color:#767676;letter-spacing:0.42px">在 DigitalVolumeCorrelat...</span>
<svg class="abs" style="left:904px;top:50px" width="14" height="14" viewBox="0 0 14 14" fill="none" stroke="#5a5a5a" stroke-width="1.2"><circle cx="8.600" cy="5.400" r="3.600"/><path d="M6 8 L1.500 12.500" stroke-linecap="round"/></svg>
<!-- command bar -->
<span class="t" style="left:18px;top:94px;color:#1d3d63">组织</span>
<svg class="abs" style="left:46px;top:98px" width="10" height="6" viewBox="0 0 10 6"><path d="M1 0.800 H9 L5 5 Z" fill="#1d3d63"/></svg>
<span class="t" style="left:85px;top:94px;color:#1d3d63">新建文件夹</span>
<svg class="abs" style="left:851px;top:94px" width="14" height="14" viewBox="0 0 14 14"><path d="M0.500 2 H12.500 M0.500 5 H12.500 M0.500 8 H12.500 M0.500 11 H12.500" stroke="#111" stroke-width="1.1"/></svg>
<svg class="abs" style="left:874px;top:98px" width="10" height="6" viewBox="0 0 10 6"><path d="M1 0.800 H9 L5 5 Z" fill="#1d3d63"/></svg>
<svg class="abs" style="left:912px;top:92px" width="18" height="18" viewBox="0 0 18 18"><circle cx="9" cy="9" r="8" fill="#0f7ddb"/><text x="9" y="13.200" text-anchor="middle" font-family="Liberation Sans,sans-serif" font-weight="bold" font-size="11.500" fill="#fff">?</text></svg>
<!-- nav pane -->
<div class="abs" style="left:10px;top:134px;width:121px;height:1px;background:#e2e2e2"></div>
<div class="abs" style="left:2px;top:246px;width:137px;height:32px;background:#e0e0e0;border-radius:3px"></div>
<div class="abs" style="left:147px;top:283px;width:2px;height:62px;background:#8a8a8a"></div>
<svg class="abs" style="left:13px;top:161px" width="6" height="9" viewBox="0 0 6 9"><path d="M0.7 0.7 L4 4.5 L0.7 8.3" fill="none" stroke="#5c5c5c" stroke-width="1.3"/></svg>
<svg class="abs" style="left:11px;top:194px" width="11" height="8" viewBox="0 0 11 8"><path d="M1 1.500 L5.500 6 L10 1.500" fill="none" stroke="#3a3a3a" stroke-width="1.300"/></svg>
<svg class="abs" style="left:21px;top:225px" width="6" height="9" viewBox="0 0 6 9"><path d="M0.7 0.7 L4 4.5 L0.7 8.3" fill="none" stroke="#5c5c5c" stroke-width="1.3"/></svg>
<svg class="abs" style="left:21px;top:257px" width="6" height="9" viewBox="0 0 6 9"><path d="M0.7 0.7 L4 4.5 L0.7 8.3" fill="none" stroke="#5c5c5c" stroke-width="1.3"/></svg>
<svg class="abs" style="left:21px;top:289px" width="6" height="9" viewBox="0 0 6 9"><path d="M0.7 0.7 L4 4.5 L0.7 8.3" fill="none" stroke="#5c5c5c" stroke-width="1.3"/></svg>
<svg class="abs" style="left:13px;top:321px" width="6" height="9" viewBox="0 0 6 9"><path d="M0.7 0.7 L4 4.5 L0.7 8.3" fill="none" stroke="#5c5c5c" stroke-width="1.3"/></svg>
<!-- nav icons -->
<svg class="abs" style="left:34px;top:158px" width="16" height="13" viewBox="0 0 16 13"><defs><linearGradient id="cg" x1="0" y1="0" x2="1" y2="1"><stop offset="0" stop-color="#25d6f2"/><stop offset="1" stop-color="#2167f0"/></linearGradient></defs><path d="M4 12 A3.500 3.500 0 0 1 3.400 5.100 A4.600 4.600 0 0 1 12 4.800 A3.700 3.700 0 0 1 12 12 Z" fill="url(#cg)"/></svg>
<svg class="abs" style="left:33px;top:189px" width="18" height="16" viewBox="0 0 18 16"><rect x="1" y="1" width="16" height="11" rx="1.200" fill="#2aa6d6"/><rect x="2.200" y="2.200" width="13.600" height="8.600" fill="#39c3e6"/><rect x="7.500" y="12" width="3" height="2" fill="#8a8f94"/><rect x="5" y="14" width="8" height="1.200" fill="#8a8f94"/></svg>
<svg class="abs" style="left:41px;top:221px" width="17" height="14" viewBox="0 0 17 14"><rect x="0.500" y="0.500" width="2.600" height="2.600" fill="#1e90e8"/><rect x="3.700" y="0.500" width="2.600" height="2.600" fill="#1e90e8"/><rect x="0.500" y="3.700" width="2.600" height="2.600" fill="#1e90e8"/><rect x="3.700" y="3.700" width="2.600" height="2.600" fill="#1e90e8"/><path d="M3 8.500 H13.500 L16 10 V13 H1 V10 Z" fill="#4a4f55"/><rect x="2" y="10.600" width="4" height="1" fill="#38d86a"/></svg>
<svg class="abs" style="left:42px;top:257px" width="16" height="8" viewBox="0 0 16 8"><rect x="0.500" y="2.300" width="14.500" height="3.200" rx="0.800" fill="#3c4046"/><rect x="1.500" y="3.500" width="3.500" height="1" fill="#38d86a"/></svg>
<svg class="abs" style="left:42px;top:288px" width="16" height="9" viewBox="0 0 16 9"><path d="M3 0.800 H12.500 L15 3 H0.500 Z" fill="#c9cdd1"/><rect x="0.500" y="3" width="14.500" height="4.300" rx="0.800" fill="#4a4f55"/><rect x="1.500" y="4.600" width="4" height="1" fill="#38d86a"/></svg>
<svg class="abs" style="left:33px;top:316px" width="18" height="18" viewBox="0 0 18 18"><rect x="4" y="4" width="13" height="9" rx="1" fill="#2aa6d6"/><rect x="5" y="5" width="11" height="7" fill="#39c3e6"/><rect x="9" y="13" width="3" height="2" fill="#8a8f94"/><rect x="7" y="15" width="7" height="1.200" fill="#8a8f94"/><circle cx="4.500" cy="4.500" r="4" fill="#3d8fe0"/><path d="M2 3 Q4 1.500 6 2.500 Q5 4.500 6.500 6 Q4 7 3 5.500 Z" fill="#7fd6a0"/></svg>
<span class="t" style="left:55px;top:158px;letter-spacing:-0.45px">WPS云盘</span>
<span class="t" style="left:55px;top:190px">此电脑</span>
<span class="t" style="left:63px;top:222px">本地磁盘 (C:)</span>
<span class="t" style="left:63px;top:254px">本地磁盘 (D:)</span>
<span class="t" style="left:63px;top:286px">本地磁盘 (E:)</span>
<span class="t" style="left:55px;top:318px">网络</span>
<!-- list header -->
<svg class="abs" style="left:302px;top:118px" width="11" height="6" viewBox="0 0 11 6"><path d="M1.500 5 L5.500 1.200 L9.500 5" fill="none" stroke="#777" stroke-width="1"/></svg>
<span class="t h" style="left:190px;top:124px">名称</span>
<span class="t h" style="left:438px;top:124px">修改日期</span>
<span class="t h" style="left:582px;top:124px">类型</span>
<span class="t h" style="left:702px;top:124px">大小</span>
<div class="abs" style="left:431px;top:117px;width:1px;height:28px;background:#e5e5e5"></div>
<div class="abs" style="left:575px;top:117px;width:1px;height:28px;background:#e5e5e5"></div>
<div class="abs" style="left:695px;top:117px;width:1px;height:28px;background:#e5e5e5"></div>
<div class="abs" style="left:775px;top:117px;width:1px;height:28px;background:#e5e5e5"></div>
<div class="abs" style="left:935px;top:135px;width:2px;height:198px;background:#8a8a8a"></div>
<svg class="abs" style="left:178px;top:155px" width="17" height="16" viewBox="0 0 17 16"><path d="M0.5 2.2 Q0.5 1 1.7 1 H5.6 L7.4 2.8 H15 Q16.2 2.8 16.2 4 V5 H0.5 Z" fill="#e8a723"/><rect x="0.5" y="3.8" width="15.8" height="10.6" rx="1.2" fill="url(#fg)"/></svg><span class="t" style="left:198px;top:156px;letter-spacing:0.21px">DVCSystem.tlog</span><span class="t g" style="left:438px;top:156px;letter-spacing:0.46px">2024/12/6 10:56</span><span class="t g" style="left:582px;top:156px">文件夹</span>
<svg class="abs" style="left:178px;top:183px" width="17" height="16" viewBox="0 0 17 16"><path d="M0.5 2.2 Q0.5 1 1.7 1 H5.6 L7.4 2.8 H15 Q16.2 2.8 16.2 4 V5 H0.5 Z" fill="#e8a723"/><rect x="0.5" y="3.8" width="15.8" height="10.6" rx="1.2" fill="url(#fg)"/></svg><span class="t" style="left:198px;top:184px">DVCSystem_Data</span><span class="t g" style="left:438px;top:184px;letter-spacing:0.46px">2024/12/6 10:56</span><span class="t g" style="left:582px;top:184px">文件夹</span>
<svg class="abs" style="left:178px;top:211px" width="17" height="16" viewBox="0 0 17 16"><path d="M0.5 2.2 Q0.5 1 1.7 1 H5.6 L7.4 2.8 H15 Q16.2 2.8 16.2 4 V5 H0.5 Z" fill="#e8a723"/><rect x="0.5" y="3.8" width="15.8" height="10.6" rx="1.2" fill="url(#fg)"/></svg><span class="t" style="left:198px;top:212px;letter-spacing:0.6px">font</span><span class="t g" style="left:438px;top:212px;letter-spacing:0.46px">2024/12/6 10:56</span><span class="t g" style="left:582px;top:212px">文件夹</span>
<svg class="abs" style="left:178px;top:239px" width="17" height="16" viewBox="0 0 17 16"><path d="M0.5 2.2 Q0.5 1 1.7 1 H5.6 L7.4 2.8 H15 Q16.2 2.8 16.2 4 V5 H0.5 Z" fill="#e8a723"/><rect x="0.5" y="3.8" width="15.8" height="10.6" rx="1.2" fill="url(#fg)"/></svg><span class="t" style="left:198px;top:240px;letter-spacing:0.37px">iconengines</span><span class="t g" style="left:438px;top:240px;letter-spacing:0.46px">2024/12/6 10:56</span><span class="t g" style="left:582px;top:240px">文件夹</span>
<svg class="abs" style="left:178px;top:267px" width="17" height="16" viewBox="0 0 17 16"><path d="M0.5 2.2 Q0.5 1 1.7 1 H5.6 L7.4 2.8 H15 Q16.2 2.8 16.2 4 V5 H0.5 Z" fill="#e8a723"/><rect x="0.5" y="3.8" width="15.8" height="10.6" rx="1.2" fill="url(#fg)"/></svg><span class="t" style="left:198px;top:268px;letter-spacing:0.62px">imageformats</span><span class="t g" style="left:438px;top:268px;letter-spacing:0.46px">2024/12/6 10:56</span><span class="t g" style="left:582px;top:268px">文件夹</span>
<svg class="abs" style="left:178px;top:295px" width="17" height="16" viewBox="0 0 17 16"><path d="M0.5 2.2 Q0.5 1 1.7 1 H5.6 L7.4 2.8 H15 Q16.2 2.8 16.2 4 V5 H0.5 Z" fill="#e8a723"/><rect x="0.5" y="3.8" width="15.8" height="10.6" rx="1.2" fill="url(#fg)"/></svg><span class="t" style="left:198px;top:296px;letter-spacing:0.63px">platforms</span><span class="t g" style="left:438px;top:296px;letter-spacing:0.46px">2024/12/6 10:56</span><span class="t g" style="left:582px;top:296px">文件夹</span>
<svg class="abs" style="left:178px;top:323px" width="17" height="16" viewBox="0 0 17 16"><path d="M0.5 2.2 Q0.5 1 1.7 1 H5.6 L7.4 2.8 H15 Q16.2 2.8 16.2 4 V5 H0.5 Z" fill="#e8a723"/><rect x="0.5" y="3.8" width="15.8" height="10.6" rx="1.2" fill="url(#fg)"/></svg><span class="t" style="left:198px;top:324px">styles</span><span class="t g" style="left:438px;top:324px;letter-spacing:0.46px">2024/12/6 10:56</span><span class="t g" style="left:582px;top:324px">文件夹</span>
<svg class="abs" style="left:178px;top:351px" width="17" height="16" viewBox="0 0 17 16"><path d="M0.5 2.2 Q0.5 1 1.7 1 H5.6 L7.4 2.8 H15 Q16.2 2.8 16.2 4 V5 H0.5 Z" fill="#e8a723"/><rect x="0.5" y="3.8" width="15.8" height="10.6" rx="1.2" fill="url(#fg)"/></svg><span class="t" style="left:198px;top:352px;letter-spacing:0.4px">translations</span><span class="t g" style="left:438px;top:352px;letter-spacing:0.46px">2024/12/6 13:37</span><span class="t g" style="left:582px;top:352px">文件夹</span>

<!-- form -->
<span class="t" style="right:822px;top:388px">文件名(N):</span>
<div class="box" style="left:125px;top:383px;width:814px;height:25px;border:1px solid #0067c0;border-bottom:2px solid #0067c0;border-radius:3px"></div>
<div class="abs" style="left:129px;top:387px;width:1px;height:17px;background:#000"></div>
<svg class="abs" style="left:923px;top:391px" width="12" height="8" viewBox="0 0 12 8"><path d="M1.500 1.500 L6 6 L10.500 1.500" fill="none" stroke="#444" stroke-width="1.100"/></svg>
<span class="t" style="right:822px;top:415px">保存类型(T):</span>
<div class="box" style="left:125px;top:410px;width:814px;height:25px;border:1px solid #d9d9d9;border-bottom:1px solid #bcbcbc;border-radius:3px;background:#fdfdfd"></div>
<span class="t" style="left:129px;top:415px">*.csv</span>
<svg class="abs" style="left:923px;top:418px" width="12" height="8" viewBox="0 0 12 8"><path d="M1.500 1.500 L6 6 L10.500 1.500" fill="none" stroke="#444" stroke-width="1.100"/></svg>
<!-- footer -->
<svg class="abs" style="left:12px;top:499px" width="12" height="8" viewBox="0 0 12 8"><path d="M1.500 6.500 L6 2 L10.500 6.500" fill="none" stroke="#222" stroke-width="1.400"/></svg>
<span class="t" style="left:30px;top:496px">隐藏文件夹</span>
<div class="box" style="left:740px;top:489px;width:86px;height:24px;border:1.500px solid #0067c0;border-radius:4px;background:#fdfdfd"></div>
<span class="t" style="left:740px;top:494px;width:86px;text-align:center;color:#000">保存(S)</span>
<div class="box" style="left:840px;top:489px;width:86px;height:24px;border:1px solid #d0d0d0;border-bottom-color:#b8b8b8;border-radius:4px;background:#fdfdfd"></div>
<span class="t" style="left:840px;top:494px;width:86px;text-align:center;color:#000">取消</span>
<svg class="abs" style="left:931px;top:519px" width="10" height="10" viewBox="0 0 10 10" fill="#b0b0b0"><rect x="7" y="1" width="1.500" height="1.500"/><rect x="4" y="4" width="1.500" height="1.500"/><rect x="7" y="4" width="1.500" height="1.500"/><rect x="1" y="7" width="1.500" height="1.500"/><rect x="4" y="7" width="1.500" height="1.500"/><rect x="7" y="7" width="1.500" height="1.500"/></svg>
</div>

<svg class="abs" style="left:0;top:0;pointer-events:none" width="960" height="540" viewBox="0 0 960 540">
<rect x="135.300" y="52.300" width="61.700" height="59.700" rx="3" fill="none" stroke="#ff1e12" stroke-width="2.600"/>
<polygon points="208.900,97 209.600,97 181.300,505 177.300,505" fill="#ff1e12"/>
<polygon points="171.300,503.500 184.300,504.500 177,517.500" fill="#ff1e12"/>
</svg>

</body>
</html>
